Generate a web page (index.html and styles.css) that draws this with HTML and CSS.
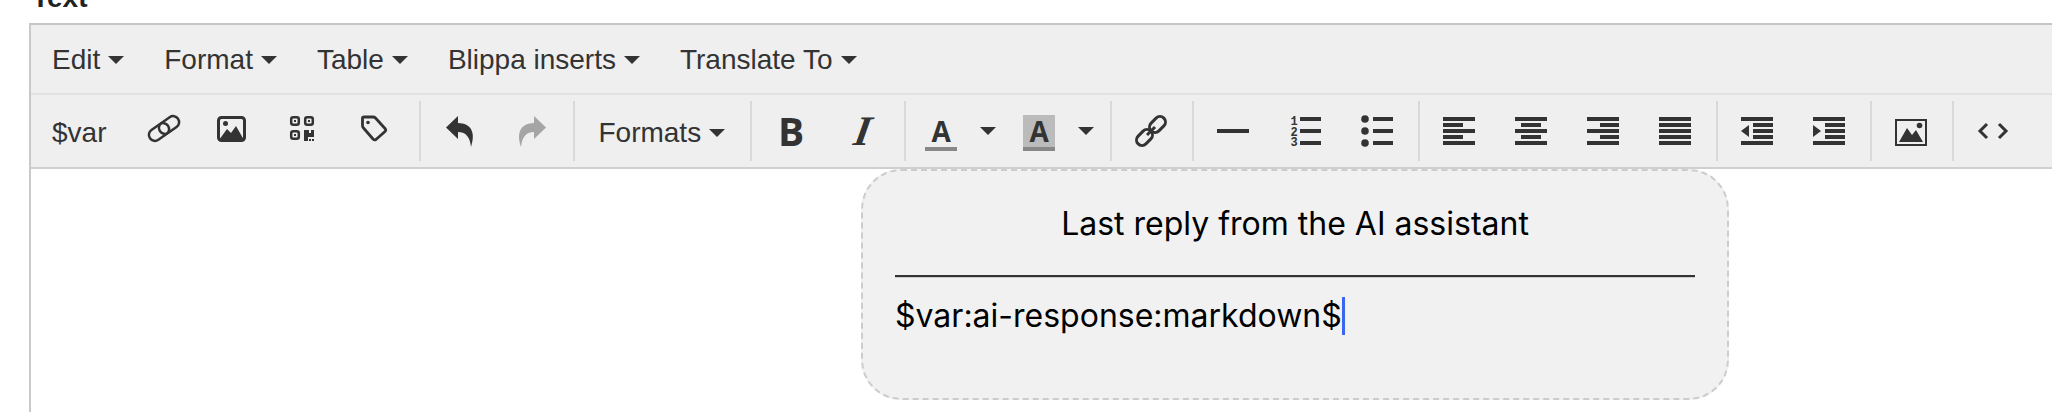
FILE: index.html
```html
<!DOCTYPE html>
<html lang="en">
<head>
  <meta charset="UTF-8" />
  <title>Text editor</title>
  <link rel="stylesheet" href="styles.css">
</head>
<body>

  <div class="field-label">Text</div>

  <div class="editor">
    <!-- Menu bar -->
    <div class="menubar">
      <div class="menu-item">Edit<i class="caret"></i></div>
      <div class="menu-item">Format<i class="caret"></i></div>
      <div class="menu-item">Table<i class="caret"></i></div>
      <div class="menu-item">Blippa inserts<i class="caret"></i></div>
      <div class="menu-item">Translate To<i class="caret"></i></div>
    </div>

    <!-- Toolbar -->
    <div class="toolbar">
      <div class="group first">
        <div class="btn label">$var</div>
        <div class="btn"><svg class="ico" viewBox="0 0 32 32"><g fill="none" stroke="currentColor" stroke-width="2.500"><rect x="2" y="11" width="22" height="12" rx="6" transform="rotate(-35 13 17)"/><rect x="12" y="4" width="22" height="12" rx="6" transform="rotate(-35 23 10)"/></g></svg></div>
        <div class="btn"><svg class="ico" viewBox="0 0 32 32"><rect x="0.500" y="2.500" width="26" height="23" rx="3" fill="none" stroke="currentColor" stroke-width="3"/><circle cx="7.500" cy="8.500" r="2.500" fill="currentColor"/><path d="M1 25 L9 14 L13 18 L18 11 L26 25 Z" fill="currentColor"/></svg></div>
        <div class="btn"><svg class="ico" viewBox="0 0 32 32"><g fill="none" stroke="currentColor" stroke-width="2.500"><rect x="1.200" y="2.200" width="7.600" height="7.600" rx="2"/><rect x="15.200" y="2.200" width="7.600" height="7.600" rx="2"/><rect x="1.200" y="16.200" width="7.600" height="7.600" rx="2"/></g><g fill="currentColor"><rect x="4" y="5" width="2" height="2"/><rect x="18" y="5" width="2" height="2"/><rect x="4" y="19" width="2" height="2"/><path d="M14 15h5v3h2v-3h3v7h-6v4h-4z"/><rect x="19" y="24" width="2" height="2"/><rect x="22" y="24" width="2" height="2"/></g></svg></div>
        <div class="btn"><svg class="ico" viewBox="0 0 32 32"><path d="M0.500 3 Q0.500 2 2 2 L11 2 Q12.500 2 13.500 3 L23 13.500 Q24.500 15 23 16.500 L14 24.500 Q12.500 25.500 11 24 L1.500 13 Q0.500 12 0.500 10.500 Z" fill="none" stroke="currentColor" stroke-width="2.800"/><circle cx="6" cy="7.500" r="1.800" fill="currentColor"/></svg></div>
      </div>

      <div class="group">
        <div class="btn"><svg class="ico" viewBox="0 0 32 32"><path d="M14 1 L2 12.500 L14 24 V17 C21 17 26 21 27 32 C32 17 27 8.500 14 8 Z" fill="currentColor"/></svg></div>
        <div class="btn off"><svg class="ico" viewBox="0 0 32 32"><path d="M18 1 L30 12.500 L18 24 V17 C11 17 6 21 5 32 C0 17 5 8.500 18 8 Z" fill="currentColor"/></svg></div>
      </div>

      <div class="group">
        <div class="btn label">Formats<i class="caret"></i></div>
      </div>

      <div class="group">
        <div class="btn"><span class="glyph bold">B</span></div>
        <div class="btn"><span class="glyph italic">I</span></div>
      </div>

      <div class="group">
        <div class="split">
          <div class="color-ico"><span class="letter">A</span><i class="color-bar"></i></div>
          <i class="caret"></i>
        </div>
        <div class="split">
          <div class="color-ico"><span class="letter marked">A</span><i class="color-bar"></i></div>
          <i class="caret"></i>
        </div>
      </div>

      <div class="group">
        <div class="btn"><svg class="ico" viewBox="0 0 32 32"><g fill="none" stroke="currentColor" stroke-width="3"><rect x="0.500" y="17" width="18" height="11" rx="5.500" transform="rotate(-45 9.500 22.500)"/><rect x="13.500" y="4" width="18" height="11" rx="5.500" transform="rotate(-45 22.500 9.500)"/><path d="M12 20 L20 12"/></g></svg></div>
      </div>

      <div class="group">
        <div class="btn"><svg class="ico" viewBox="0 0 32 32"><rect y="14" width="32" height="4" fill="currentColor"/></svg></div>
        <div class="btn"><svg class="ico" viewBox="0 0 32 32"><g fill="currentColor"><text class="num" x="1.500" y="10">1</text><text class="num" x="1.500" y="20.500">2</text><text class="num" x="1.500" y="31">3</text><rect x="11" y="2" width="21" height="4"/><rect x="11" y="14" width="21" height="4"/><rect x="11" y="26" width="21" height="4"/></g></svg></div>
        <div class="btn"><svg class="ico" viewBox="0 0 32 32"><g fill="currentColor"><circle cx="4" cy="4" r="3.800"/><circle cx="4" cy="16" r="3.800"/><circle cx="4" cy="28" r="3.800"/><rect x="12" y="2" width="20" height="4"/><rect x="12" y="14" width="20" height="4"/><rect x="12" y="26" width="20" height="4"/></g></svg></div>
      </div>

      <div class="group">
        <div class="btn"><svg class="ico" viewBox="0 0 32 32"><path d="M0 2h32v4H0zM0 8h20v4H0zM0 14h32v4H0zM0 20h20v4H0zM0 26h32v4H0z" fill="currentColor"/></svg></div>
        <div class="btn"><svg class="ico" viewBox="0 0 32 32"><path d="M0 2h32v4H0zM6 8h20v4H6zM0 14h32v4H0zM6 20h20v4H6zM0 26h32v4H0z" fill="currentColor"/></svg></div>
        <div class="btn"><svg class="ico" viewBox="0 0 32 32"><path d="M0 2h32v4H0zM13 8h19v4H13zM0 14h32v4H0zM13 20h19v4H13zM0 26h32v4H0z" fill="currentColor"/></svg></div>
        <div class="btn"><svg class="ico" viewBox="0 0 32 32"><path d="M0 2h32v4H0zM0 8h32v4H0zM0 14h32v4H0zM0 20h32v4H0zM0 26h32v4H0z" fill="currentColor"/></svg></div>
      </div>

      <div class="group">
        <div class="btn"><svg class="ico" viewBox="0 0 32 32"><path d="M0 2h32v4H0zM12 8h20v4H12zM12 14h20v4H12zM12 20h20v4H12zM0 26h32v4H0zM0 16l8-6v12z" fill="currentColor"/></svg></div>
        <div class="btn"><svg class="ico" viewBox="0 0 32 32"><path d="M0 2h32v4H0zM12 8h20v4H12zM12 14h20v4H12zM12 20h20v4H12zM0 26h32v4H0zM8 16l-8-6v12z" fill="currentColor"/></svg></div>
      </div>

      <div class="group">
        <div class="btn"><svg class="ico" viewBox="0 0 32 32"><rect x="1" y="5" width="30" height="25" fill="none" stroke="currentColor" stroke-width="2"/><circle cx="24.500" cy="10.500" r="2.800" fill="currentColor"/><path d="M4 27 L12 13 L17 20 L21 15 L28 27 Z" fill="currentColor"/></svg></div>
      </div>

      <div class="group">
        <div class="btn"><svg class="ico" viewBox="0 0 32 32"><path d="M10 9 L3 16 L10 23 M22 9 L29 16 L22 23" fill="none" stroke="currentColor" stroke-width="3"/></svg></div>
      </div>
    </div>

    <!-- Content -->
    <div class="content">
      <div class="ai-block">
        <p class="ai-title">Last reply from the AI assistant</p>
        <hr class="ai-rule">
        <p class="ai-var">$var:ai-response:markdown$<i class="text-cursor"></i></p>
      </div>
    </div>
  </div>

</body>
</html>
```

FILE: styles.css
```css
html, body {
  height: 100%;
}

body {
  margin: 0;
  overflow: hidden;
  background: #fff;
  font-family: "Liberation Sans", Arial, sans-serif;
  color: #333;
}

.field-label {
  margin: -19px 0 8px 32px;
  height: 34px;
  line-height: 34px;
  font-size: 28px;
  font-weight: bold;
  color: #222;
}

.editor {
  width: 2528px;
  margin-left: 29px;
  border-top: 2px solid #c5c5c5;
  border-left: 2px solid #c9c9c9;
}

.caret {
  display: inline-block;
  width: 0;
  height: 0;
  margin-left: 8px;
  border-top: 8px solid #333;
  border-left: 8px solid transparent;
  border-right: 8px solid transparent;
}

/* Menu bar */
.menubar {
  display: flex;
  height: 68px;
  padding-left: 1px;
  background: #efefef;
  border-bottom: 2px solid #e2e2e2;
}

.menu-item {
  display: flex;
  align-items: center;
  padding: 2px 20px 0;
  font-size: 28px;
}

/* Toolbar */
.toolbar {
  display: flex;
  align-items: center;
  height: 72px;
  background: #efefef;
  border-bottom: 2px solid #cfcfcf;
}

.group {
  display: flex;
  align-items: center;
  height: 60px;
  padding: 0 5px 0 3px;
  border-left: 2px solid #d9d9d9;
}

.group.first {
  border-left: 0;
  padding-left: 1px;
}

.btn {
  display: flex;
  align-items: center;
  height: 60px;
  padding: 0 20px;
  font-size: 28px;
}

.btn.label {
  height: 56px;
  padding-top: 4px;
}

.btn.off {
  color: #a5a5a5;
}

.ico {
  display: block;
  width: 32px;
  height: 32px;
  overflow: visible;
}

.num {
  font-family: "Liberation Mono", monospace;
  font-size: 12px;
  font-weight: bold;
}

.glyph {
  display: block;
  width: 32px;
  height: 32px;
  line-height: 32px;
  text-align: center;
}

.glyph.bold {
  font-family: "Open Sans", sans-serif;
  font-size: 39px;
  font-weight: bold;
}

.glyph.italic {
  font-family: "Liberation Serif", serif;
  font-size: 42px;
  font-weight: bold;
  font-style: italic;
  transform: skewX(-10deg);
}

/* Colour split buttons */
.split {
  display: flex;
  align-items: center;
  width: 98px;
  height: 60px;
  padding-left: 16px;
  box-sizing: border-box;
}

.split .caret {
  margin-left: 23px;
}

.color-ico {
  width: 32px;
  height: 36px;
  margin-top: 4px;
}

.letter {
  display: block;
  height: 32px;
  line-height: 32px;
  text-align: center;
  font-family: "Open Sans", sans-serif;
  font-size: 28px;
  font-weight: bold;
}

.letter.marked {
  background: #bbb;
}

.color-bar {
  display: block;
  height: 4px;
  background: #888;
}

/* Editor content */
.content {
  height: 260px;
  background: #fff;
}

.ai-block {
  box-sizing: border-box;
  width: 868px;
  height: 231px;
  margin: 0 auto;
  padding: 0 32px;
  border: 2px dashed #ccc;
  border-radius: 40px;
  background: #f1f1f1;
  font-family: Inter, sans-serif;
  font-size: 32px;
  line-height: 38px;
  color: #000;
}

.ai-title {
  margin: 34px 0 32px;
  text-align: center;
}

.ai-rule {
  height: 0;
  margin: 0 0 19px;
  border: 0;
  border-top: 2px solid #333;
  border-bottom: 1px solid #ccc;
}

.ai-var {
  margin: 0;
}

.text-cursor {
  display: inline-block;
  width: 3px;
  height: 38px;
  vertical-align: top;
  background: #3a66ef;
}
```
